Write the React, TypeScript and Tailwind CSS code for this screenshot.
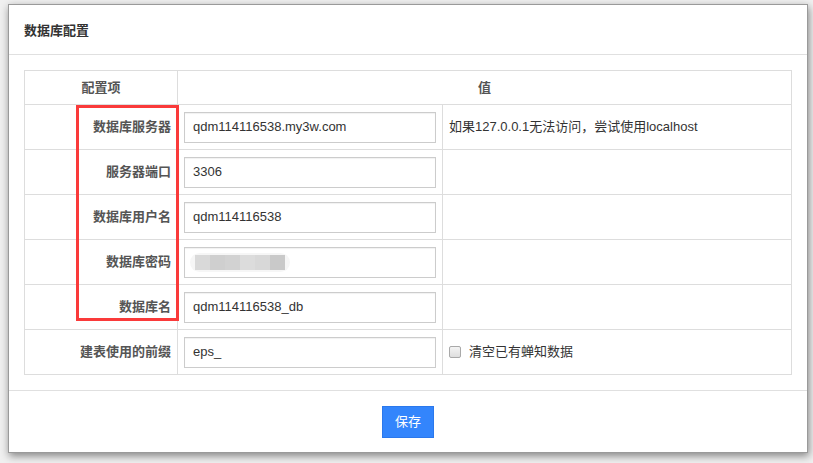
import React from "react";

const rows: { label: string; value: string; hint?: string; password?: boolean; check?: boolean }[] = [
  { label: "数据库服务器", value: "qdm114116538.my3w.com", hint: "如果127.0.0.1无法访问，尝试使用localhost" },
  { label: "服务器端口", value: "3306" },
  { label: "数据库用户名", value: "qdm114116538" },
  { label: "数据库密码", value: "", password: true },
  { label: "数据库名", value: "qdm114116538_db" },
  { label: "建表使用的前缀", value: "eps_", check: true },
];

const blocks = ["#d9d9d9", "#cfcfcf", "#d2d2d2", "#dcdcdc", "#d8d8d8", "#c9c9c9"];

export default function App() {
  return (
    <div
      className="relative w-[813px] h-[463px] bg-[#f0f0f0] pt-[4px] pl-[8px] overflow-hidden"
      style={{ fontFamily: '"Liberation Sans", "Noto Sans CJK SC", sans-serif' }}
    >
      <div className="w-[800px] h-[449px] bg-white border border-[#9a9a9a] shadow-[1px_3px_8px_rgba(0,0,0,0.45)] flex flex-col">
        <div className="h-[50px] border-b border-[#e0e0e0] pl-[15px] flex items-center">
          <span className="text-[13px] font-bold text-[#333] pt-[2px]">数据库配置</span>
        </div>
        <div className="px-[15px] pt-[15px] pb-[15px] border-b border-[#e0e0e0]">
          <table className="w-[768px] border-collapse text-[13px] text-[#333]">
            <colgroup>
              <col className="w-[153px]" />
              <col className="w-[265px]" />
              <col />
            </colgroup>
            <thead>
              <tr className="h-[34px]">
                <th className="border border-[#dddddd] font-bold text-[#555] text-center">配置项</th>
                <th colSpan={2} className="border border-[#dddddd] font-bold text-[#555] text-center">值</th>
              </tr>
            </thead>
            <tbody>
              {rows.map((r) => (
                <tr key={r.label} className="h-[45px]">
                  <td className="border border-[#dddddd] text-right pr-[6px] font-bold text-[#555]">{r.label}</td>
                  <td className="border border-[#dddddd] px-[6px]">
                    <div className="w-[252px] h-[31px] border border-[#cccccc] shadow-[inset_0_1px_1px_rgba(0,0,0,0.06)] flex items-center pl-[8px] text-[#333]">
                      {r.password ? (
                        <div className="flex items-center h-[19px] px-[5px] rounded-full bg-[#f6f6f6] -ml-[3px]">
                          {blocks.map((c, i) => (
                            <div key={i} className="w-[15px] h-[15px]" style={{ backgroundColor: c }} />
                          ))}
                        </div>
                      ) : (
                        r.value
                      )}
                    </div>
                  </td>
                  <td className="border border-[#dddddd] pl-[6px] text-[#333]">
                    {r.hint}
                    {r.check && (
                      <label className="flex items-center gap-[8px]">
                        <span className="w-[12px] h-[12px] rounded-[2px] border border-[#a9a9a9] bg-gradient-to-b from-[#f4f4f4] to-[#dedede] inline-block" />
                        <span>清空已有蝉知数据</span>
                      </label>
                    )}
                  </td>
                </tr>
              ))}
            </tbody>
          </table>
        </div>
        <div className="flex justify-center pt-[15px]">
          <button className="w-[52px] h-[32px] bg-[#3385fc] border border-[#2b78ec] text-white text-[13px]">保存</button>
        </div>
      </div>
      <div className="absolute left-[76px] top-[105px] w-[103px] h-[216px] border-[3px] border-[#fa3a3a]" />
    </div>
  );
}
